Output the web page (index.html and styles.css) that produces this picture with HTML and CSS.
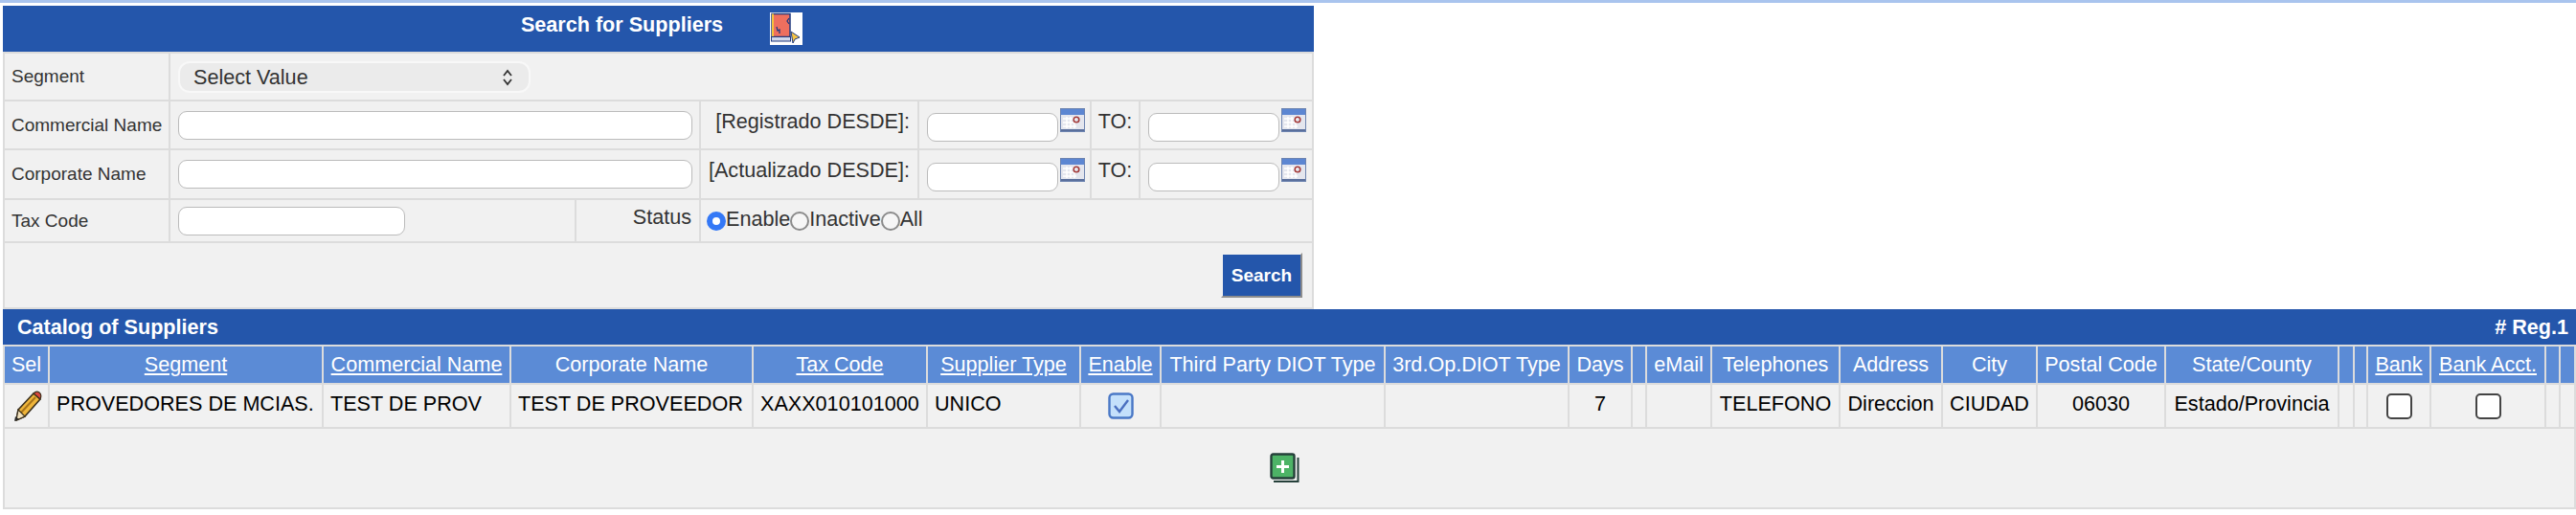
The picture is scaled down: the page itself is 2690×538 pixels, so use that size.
FILE: index.html
```html
<!DOCTYPE html>
<html lang="en">
<head>
    <meta charset="UTF-8">
    <title>Catalog of Suppliers</title>
    <link rel="stylesheet" href="styles.css">
</head>
<body>
    <div class="top-stripe"></div>

    <section class="search-panel">
        <div class="search-title">
            <span>Search for Suppliers</span>
            <svg class="book-icon" width="34" height="34" viewBox="0 0 34 34">
                <rect width="34" height="34" fill="#fff"/>
                <rect x="2" y="1.5" width="19" height="24" fill="#ee6f5e" stroke="#1f3a80" stroke-width="1.5"/>
                <rect x="2" y="1.5" width="2" height="24" fill="#f3c33c"/>
                <path d="M20 6l-2 3 2 3M7 15l1 4 2-1 0 4" fill="none" stroke="#1f3a80" stroke-width="1.3"/>
                <rect x="1.5" y="25.5" width="20" height="4.5" fill="#cfd6ea" stroke="#1f3a80"/>
                <path d="M22 20l9 6-5 2-2 4z" fill="#f5c445" stroke="#1f3a80"/>
            </svg>
        </div>
        <table class="search-table">
            <colgroup>
                <col class="s-label"><col class="s-input"><col class="s-status"><col class="s-range"><col class="s-date"><col class="s-to"><col class="s-date2">
            </colgroup>
            <tr class="row-segment">
                <td class="label">Segment</td>
                <td colspan="6">
                    <div class="select-wrap">
                        <select class="select"><option>Select Value</option></select>
                        <svg class="chevrons" width="12" height="20" viewBox="0 0 12 20">
                            <path d="M2 8l4-5 4 5M2 12l4 5 4-5" fill="none" stroke="#333" stroke-width="1.8"/>
                        </svg>
                    </div>
                </td>
            </tr>
            <tr class="row-commercial">
                <td class="label">Commercial Name</td>
                <td colspan="2"><input class="text-input wide" type="text"></td>
                <td class="range-label">[Registrado DESDE]:</td>
                <td>
                    <div class="date-field">
                        <input class="text-input date" type="text">
                        <svg class="cal" width="26" height="25" viewBox="0 0 26 25"><use href="#cal-icon"/></svg>
                    </div>
                </td>
                <td class="to-label">TO:</td>
                <td>
                    <div class="date-field">
                        <input class="text-input date" type="text">
                        <svg class="cal" width="26" height="25" viewBox="0 0 26 25"><use href="#cal-icon"/></svg>
                    </div>
                </td>
            </tr>
            <tr class="row-corporate">
                <td class="label">Corporate Name</td>
                <td colspan="2"><input class="text-input wide" type="text"></td>
                <td class="range-label">[Actualizado DESDE]:</td>
                <td>
                    <div class="date-field">
                        <input class="text-input date" type="text">
                        <svg class="cal" width="26" height="25" viewBox="0 0 26 25"><use href="#cal-icon"/></svg>
                    </div>
                </td>
                <td class="to-label">TO:</td>
                <td>
                    <div class="date-field">
                        <input class="text-input date" type="text">
                        <svg class="cal" width="26" height="25" viewBox="0 0 26 25"><use href="#cal-icon"/></svg>
                    </div>
                </td>
            </tr>
            <tr class="row-tax">
                <td class="label">Tax Code</td>
                <td><input class="text-input tax" type="text"></td>
                <td class="range-label">Status</td>
                <td colspan="4">
                    <div class="radios">
                        <input class="radio" type="radio" name="status" checked><span>Enable</span>
                        <input class="radio" type="radio" name="status"><span>Inactive</span>
                        <input class="radio" type="radio" name="status"><span>All</span>
                    </div>
                </td>
            </tr>
            <tr class="row-action">
                <td class="action-cell" colspan="7"><button class="search-btn">Search</button></td>
            </tr>
        </table>
    </section>

    <section class="catalog">
        <div class="catalog-title">
            <span>Catalog of Suppliers</span>
            <span># Reg.1</span>
        </div>
        <table class="catalog-table">
            <colgroup>
                <col class="c-sel"><col class="c-segment"><col class="c-commercial"><col class="c-corporate"><col class="c-tax"><col class="c-supplier"><col class="c-enable"><col class="c-third"><col class="c-op"><col class="c-days"><col class="c-gap13"><col class="c-email"><col class="c-tel"><col class="c-address"><col class="c-city"><col class="c-postal"><col class="c-state"><col class="c-gap14"><col class="c-gap12"><col class="c-bank"><col class="c-acct"><col class="c-gap13"><col class="c-gap14">
            </colgroup>
            <thead>
                <tr>
                    <th>Sel</th>
                    <th><a href="#">Segment</a></th>
                    <th><a href="#">Commercial Name</a></th>
                    <th>Corporate Name</th>
                    <th><a href="#">Tax Code</a></th>
                    <th><a href="#">Supplier Type</a></th>
                    <th><a href="#">Enable</a></th>
                    <th>Third Party DIOT Type</th>
                    <th>3rd.Op.DIOT Type</th>
                    <th>Days</th>
                    <th></th>
                    <th>eMail</th>
                    <th>Telephones</th>
                    <th>Address</th>
                    <th>City</th>
                    <th>Postal Code</th>
                    <th>State/County</th>
                    <th></th>
                    <th></th>
                    <th><a href="#">Bank</a></th>
                    <th><a href="#">Bank Acct.</a></th>
                    <th></th>
                    <th></th>
                </tr>
            </thead>
            <tbody>
                <tr class="data-row">
                    <td class="center">
                        <svg class="pencil" width="32" height="33" viewBox="0 0 32 33">
                            <path d="M7 20L23 3l7 6-16 18-9 4z" fill="#efb53a" stroke="#3a2f1c" stroke-width="1.6" stroke-linejoin="round"/>
                            <path d="M10 23L25 7" stroke="#a8741a" stroke-width="2"/>
                            <path d="M23 3q3-3 6-1t1 7z" fill="#d9463d" stroke="#3a2f1c" stroke-width="1.2"/>
                            <path d="M7 20l7 7-9 4z" fill="#f3e3bf" stroke="#3a2f1c" stroke-width="1.2"/>
                            <path d="M3 32l1-5 4 3z" fill="#2a2a2a"/>
                        </svg>
                    </td>
                    <td>PROVEDORES DE MCIAS.</td>
                    <td>TEST DE PROV</td>
                    <td>TEST DE PROVEEDOR</td>
                    <td>XAXX010101000</td>
                    <td>UNICO</td>
                    <td class="center">
                        <svg class="check-icon" width="27" height="28" viewBox="0 0 27 28">
                            <rect x="1.5" y="1.5" width="24" height="25" rx="4" fill="#c4e0fb" stroke="#4a78c6" stroke-width="2.4"/>
                            <path d="M7 14l5 6 9-12" fill="none" stroke="#4a6fc0" stroke-width="2.4"/>
                        </svg>
                    </td>
                    <td></td>
                    <td></td>
                    <td class="center">7</td>
                    <td></td>
                    <td></td>
                    <td class="center">TELEFONO</td>
                    <td class="center">Direccion</td>
                    <td class="center">CIUDAD</td>
                    <td class="center">06030</td>
                    <td class="center">Estado/Provincia</td>
                    <td></td>
                    <td></td>
                    <td class="center"><span class="box"></span></td>
                    <td class="center"><span class="box"></span></td>
                    <td></td>
                    <td></td>
                </tr>
                <tr class="add-row">
                    <td colspan="23">
                        <svg class="add-icon" width="32" height="32" viewBox="0 0 32 32">
                            <path d="M29.5 5v25H4" fill="none" stroke="#25403a" stroke-width="2"/>
                            <rect x="1.5" y="1.5" width="24" height="25" rx="2" fill="#4db366" stroke="#25403a" stroke-width="2.4"/>
                            <path d="M13.5 8v13M7 14.500h13" stroke="#fff" stroke-width="3"/>
                        </svg>
                    </td>
                </tr>
            </tbody>
        </table>
    </section>

    <svg class="sprites" width="0" height="0">
        <symbol id="cal-icon" viewBox="0 0 26 25">
            <rect x="0.500" y="0.500" width="25" height="24" fill="#e4e6ee" stroke="#6d84b0"/>
            <rect x="1" y="1" width="24" height="6" fill="#5c86d2"/>
            <rect x="1" y="22" width="24" height="2" fill="#5a6f9c"/>
            <path d="M3 11h14M3 15h14M3 19h14M7 9v12M11 9v12M15 9v12" stroke="#fff" stroke-width="1.500"/>
            <circle cx="17" cy="12" r="2.800" fill="none" stroke="#a33a3a" stroke-width="1.600"/>
        </symbol>
    </svg>
</body>
</html>
```

FILE: styles.css
```css
body {
    margin: 0;
    background: #fff;
    font-family: "Liberation Sans", Arial, sans-serif;
    color: #333;
}

table {
    table-layout: fixed;
    border-collapse: separate;
    border-spacing: 2px;
    background-color: #dcdcdc;
}

td, th {
    padding: 0;
    background-color: #f1f1f1;
    overflow: hidden;
    white-space: nowrap;
}

.sprites {
    position: absolute;
}

.top-stripe {
    height: 3px;
    margin-bottom: 3px;
    background-color: #a9c4ee;
}

/* search panel */
.search-panel {
    width: 1369px;
    margin-left: 3px;
}

.search-title {
    display: flex;
    justify-content: center;
    align-items: center;
    gap: 49px;
    height: 48px;
    padding-left: 7px;
    box-sizing: border-box;
    background-color: #2456ab;
    color: #fff;
    font-size: 21.6px;
    font-weight: bold;
}

.search-title span {
    padding-bottom: 8px;
}

.search-table {
    width: 1369px;
}

.s-label { width: 171px; }
.s-input { width: 422px; }
.s-status { width: 128px; }
.s-range { width: 226px; }
.s-date { width: 178px; }
.s-to { width: 49px; }
.s-date2 { width: 179px; }

.row-segment { height: 48px; }
.row-commercial { height: 49px; }
.row-corporate { height: 50px; }
.row-tax { height: 43px; }
.row-action { height: 67px; }

.search-table td {
    font-size: 19px;
}

.label {
    padding-left: 7px;
}

.search-table td:not(.label):not(.range-label):not(.to-label):not(.action-cell) {
    padding-left: 8px;
}

.range-label {
    text-align: right;
    padding-right: 8px;
    padding-bottom: 8px;
    font-size: 21.6px !important;
}

.to-label {
    text-align: center;
    padding-bottom: 8px;
    font-size: 21.6px !important;
}

.select-wrap {
    position: relative;
    width: 368px;
    height: 33px;
}

.select {
    appearance: none;
    width: 100%;
    height: 100%;
    padding: 0 0 0 14px;
    background-color: #ebebeb;
    border: 2px solid #f8f8f8;
    border-radius: 12px;
    font-family: inherit;
    font-size: 21.6px;
    color: #333;
}

.chevrons {
    position: absolute;
    top: 7px;
    right: 18px;
}

.text-input {
    display: block;
    box-sizing: border-box;
    height: 30px;
    padding: 0 6px;
    background-color: #fff;
    border: 1px solid #bbb;
    border-radius: 9px;
}

.text-input.wide { width: 537px; }
.text-input.tax { width: 237px; }
.text-input.date { width: 137px; margin-top: 5px; }

.date-field {
    display: flex;
    align-items: flex-start;
    gap: 2px;
}

.row-corporate .date-field {
    padding-top: 1px;
}

.cal {
    flex: none;
}

.radios {
    display: flex;
    align-items: center;
    font-size: 21.6px;
    margin-left: -2px;
}

.radios span {
    padding-bottom: 4px;
}

.radio {
    appearance: none;
    flex: none;
    width: 20px;
    height: 20px;
    margin: 0;
    box-sizing: border-box;
    background-color: #f6f6f6;
    border: 2px solid #8b8b8b;
    border-radius: 50%;
}

.radio:checked {
    background-color: #fff;
    border: 6px solid #3478f6;
}

.action-cell {
    text-align: right;
    padding-right: 10px;
}

.search-btn {
    width: 85px;
    height: 47px;
    padding: 0;
    background-color: #2456ab;
    color: #fff;
    border: 2px solid;
    border-color: #f1f1f1 #8d8d8d #8d8d8d #f1f1f1;
    font-family: inherit;
    font-size: 19px;
    font-weight: bold;
}

/* catalog */
.catalog {
    width: 2687px;
    margin-left: 3px;
}

.catalog-title {
    display: flex;
    justify-content: space-between;
    align-items: center;
    height: 37px;
    padding: 0 8px 0 15px;
    background-color: #2456ab;
    color: #fff;
    font-size: 21.6px;
    font-weight: bold;
}

.catalog-table {
    width: 2687px;
}

.c-sel { width: 45px; }
.c-segment { width: 284px; }
.c-commercial { width: 194px; }
.c-corporate { width: 251px; }
.c-tax { width: 180px; }
.c-supplier { width: 158px; }
.c-enable { width: 82px; }
.c-third { width: 232px; }
.c-op { width: 190px; }
.c-days { width: 64px; }
.c-gap13 { width: 13px; }
.c-email { width: 66px; }
.c-tel { width: 132px; }
.c-address { width: 105px; }
.c-city { width: 97px; }
.c-postal { width: 132px; }
.c-state { width: 179px; }
.c-gap14 { width: 14px; }
.c-gap12 { width: 12px; }
.c-bank { width: 64px; }
.c-acct { width: 118px; }

.catalog-table th {
    height: 38px;
    background-color: #5b8bd6;
    color: #fff;
    font-size: 21.6px;
    font-weight: normal;
    text-align: center;
}

.catalog-table th a {
    color: #fff;
}

.data-row td {
    height: 44px;
    padding: 0 0 0 7px;
    color: #000;
    font-size: 21.6px;
    line-height: 1;
    padding-bottom: 4px;
    box-sizing: border-box;
}

.data-row td.center {
    padding-left: 0;
    text-align: center;
}

.data-row svg, .box {
    display: block;
    margin: 4px auto 0;
}

.pencil {
    margin-left: 7px !important;
}

.box {
    box-sizing: border-box;
    width: 27px;
    height: 27px;
    background-color: #fff;
    border: 2px solid #444;
    border-radius: 5px;
}

.add-row td {
    height: 82px;
    text-align: center;
}

.add-icon {
    display: block;
    margin: 0 auto;
    position: relative;
    left: -5px;
}
```
